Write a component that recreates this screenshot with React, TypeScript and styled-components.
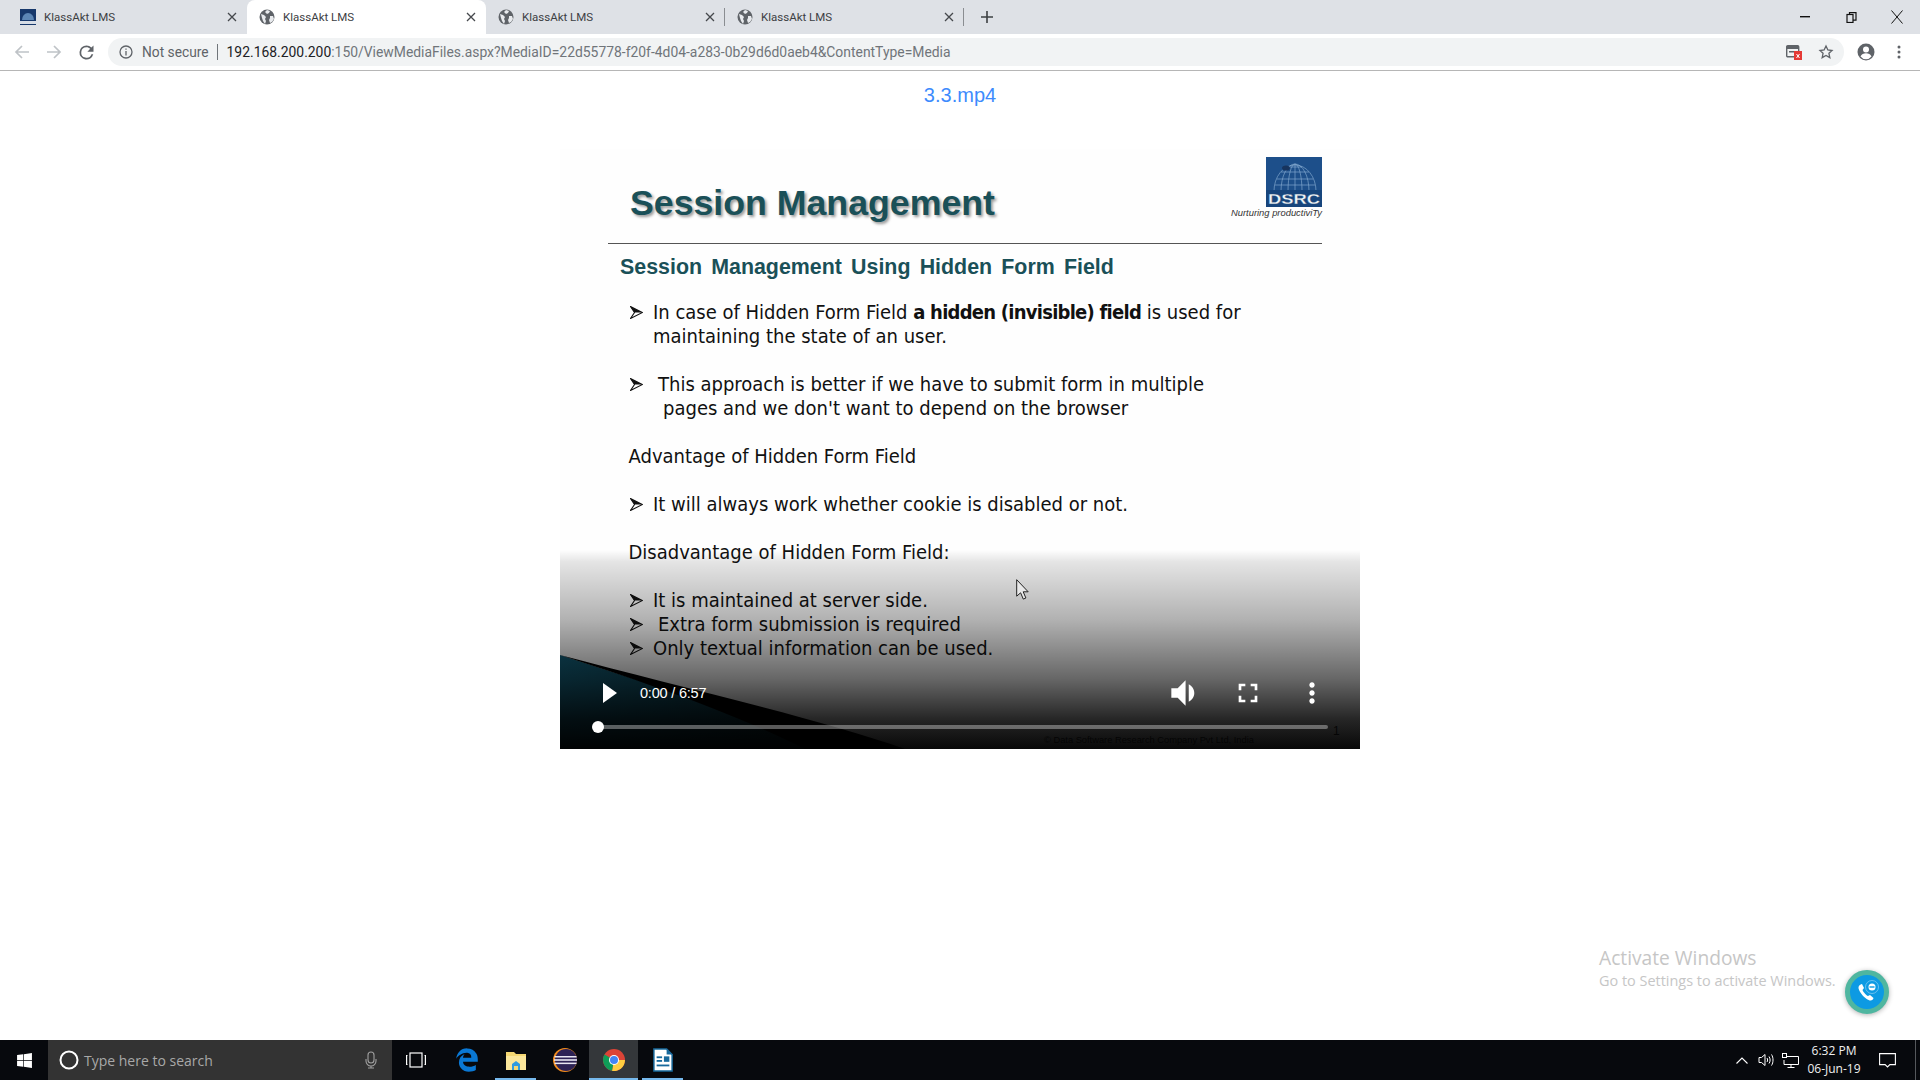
import React from "react";
import styled, { createGlobalStyle } from "styled-components";
import { FaWindows, FaEdgeLegacy } from "react-icons/fa";

const Global = createGlobalStyle`
  html, body { margin: 0; padding: 0; background: #fff; overflow: hidden; }
  * { box-sizing: border-box; }
`;

const Page = styled.div`
  width: 1920px;
  height: 1080px;
  display: flex;
  flex-direction: column;
  font-family: "Roboto", "Liberation Sans", sans-serif;
  position: relative;
  overflow: hidden;
`;

const TabStrip = styled.div`
  height: 34px;
  background: #dee1e6;
  display: flex;
  align-items: stretch;
  padding-left: 8px;
`;

const Tab = styled.div<{ $active?: boolean; $sep?: boolean }>`
  width: 239px;
  display: flex;
  align-items: center;
  padding: 0 0 0 12px;
  position: relative;
  background: ${(p) => (p.$active ? "#fff" : "transparent")};
  border-radius: 8px 8px 0 0;
  font-size: 11.5px;
  color: #3c4043;
  &::after {
    content: "";
    display: ${(p) => (p.$sep ? "block" : "none")};
    position: absolute;
    right: 0;
    top: 8px;
    height: 18px;
    width: 1px;
    background: #8a8d91;
  }
`;

const TabIcon = styled.span`
  width: 16px;
  height: 16px;
  display: flex;
  margin-right: 8px;
  flex: none;
`;

const TabTitle = styled.span`
  flex: 1;
  white-space: nowrap;
`;

const TabClose = styled.span`
  width: 10px;
  margin-right: 10px;
  display: flex;
  color: #45484c;
`;

const NewTab = styled.div`
  width: 44px;
  padding-left: 2px;
  display: flex;
  align-items: center;
  justify-content: center;
  color: #3c4043;
`;

const WindowButtons = styled.div`
  margin-left: auto;
  display: flex;
  align-items: center;
`;

const WindowButton = styled.div`
  width: 46px;
  height: 28px;
  display: flex;
  align-items: center;
  justify-content: center;
  color: #111;
`;

const Toolbar = styled.div`
  height: 37px;
  background: #fff;
  border-bottom: 1px solid #b6b6b6;
  display: flex;
  align-items: flex-start;
  padding-top: 4px;
`;

const NavButtons = styled.div`
  width: 108px;
  height: 28px;
  display: flex;
  align-items: center;
  padding-left: 14px;
  gap: 16px;
`;

const ReloadIcon = styled.svg`
  margin-left: -2px;
`;

const Omnibox = styled.div`
  width: 1736px;
  height: 28px;
  background: #f1f3f4;
  border-radius: 14px;
  display: flex;
  align-items: center;
  padding-left: 11px;
  white-space: nowrap;
`;

const SecurityLabel = styled.span`
  color: #5f6368;
  font-size: 13.75px;
  margin-left: 9px;
  padding-right: 8px;
  border-right: 1px solid #70757a;
  line-height: 16px;
`;

const UrlHost = styled.span`
  color: #202124;
  font-size: 13.9px;
  margin-left: 9px;
`;

const UrlPath = styled.span`
  color: #70757a;
  font-size: 13.9px;
`;

const OmniboxEnd = styled.div`
  margin-left: auto;
  display: flex;
  align-items: center;
  gap: 16px;
  padding-right: 10px;
`;

const ToolbarEnd = styled.div`
  flex: 1;
  height: 28px;
  display: flex;
  align-items: center;
  padding-left: 13px;
  gap: 22px;
`;

const Content = styled.div`
  flex: 1;
  background: #fff;
  display: flex;
  flex-direction: column;
  align-items: center;
`;

const MediaTitle = styled.div`
  font-family: "Liberation Sans", Arial, sans-serif;
  font-size: 20px;
  line-height: 48px;
  color: #3d8bfd;
  margin-bottom: 30px;
`;

const Video = styled.div`
  width: 800px;
  height: 600px;
  position: relative;
  overflow: hidden;
  background: #fefefe;
`;

const Slide = styled.div`
  height: 100%;
  padding: 0 38px 0 48px;
`;

const SlideHeader = styled.div`
  height: 95px;
  border-bottom: 1px solid #555;
  display: flex;
  justify-content: space-between;
  align-items: flex-start;
  padding-left: 22px;
`;

const SlideHeading = styled.h1`
  margin: 34px 0 0;
  font-family: "Liberation Sans", Arial, sans-serif;
  font-weight: 700;
  font-size: 35.7px;
  line-height: 40px;
  color: #1a5058;
  text-shadow: 2px 2px 3px rgba(0, 0, 0, 0.4);
`;

const Logo = styled.div`
  margin-top: 8px;
  display: flex;
  flex-direction: column;
  align-items: flex-end;
`;

const LogoTag = styled.div`
  font-family: "Liberation Sans", Arial, sans-serif;
  font-style: italic;
  font-size: 9.4px;
  line-height: 12px;
  color: #333;
  white-space: nowrap;
`;

const SlideSub = styled.h2`
  margin: 9px 0 0;
  padding-left: 12px;
  font-family: "Liberation Sans", Arial, sans-serif;
  font-weight: 700;
  font-size: 21.4px;
  line-height: 28px;
  word-spacing: 3.2px;
  color: #1a5058;
`;

const SlideBody = styled.div`
  margin-top: 19px;
  padding-left: 20.5px;
  font-family: "DejaVu Sans Condensed", "DejaVu Sans", sans-serif;
  font-size: 20px;
  line-height: 24px;
  color: #111;
`;

const Row = styled.div<{ $gap?: boolean }>`
  display: flex;
  margin-bottom: ${(p) => (p.$gap ? "24px" : "0")};
`;

const Plain = styled.div`
  margin-bottom: 24px;
`;

const Arrow = styled.span`
  width: 24.5px;
  height: 24px;
  padding-left: 1px;
  flex: none;
  display: flex;
  align-items: center;
`;

const RowText = styled.div<{ $indent?: number }>`
  padding-left: ${(p) => p.$indent ?? 0}px;
`;

const Hanging = styled.span`
  display: block;
  padding-left: 5px;
`;

const Strong = styled.b`
  letter-spacing: -0.75px;
`;

const SlideDecor = styled.svg`
  position: absolute;
  left: 0;
  bottom: 0;
`;

const SlideFooter = styled.span`
  position: absolute;
  left: 484px;
  bottom: 4px;
  font-family: "Liberation Sans", Arial, sans-serif;
  font-size: 9.3px;
  color: #3a3a3a;
  white-space: nowrap;
`;

const SlideNumber = styled.span`
  position: absolute;
  left: 773px;
  bottom: 11px;
  font-family: "Liberation Sans", Arial, sans-serif;
  font-size: 12px;
  color: #333;
`;

const Shade = styled.div`
  position: absolute;
  left: 0;
  right: 0;
  bottom: 0;
  height: 199px;
  background: linear-gradient(
    rgba(0, 0, 0, 0) 0%,
    rgba(0, 0, 0, 0.1) 6%,
    rgba(0, 0, 0, 0.3) 35%,
    rgba(0, 0, 0, 0.6) 65%,
    rgba(0, 0, 0, 0.85) 85%,
    rgba(0, 0, 0, 0.97) 100%
  );
`;

const Controls = styled.div`
  position: absolute;
  left: 0;
  right: 0;
  bottom: 0;
  height: 78px;
  color: #fff;
  display: flex;
  flex-direction: column;
`;

const ControlRow = styled.div`
  height: 32px;
  margin-top: 6px;
  display: flex;
  align-items: center;
  padding-left: 42px;
`;

const Time = styled.span`
  font-family: "Liberation Sans", Arial, sans-serif;
  font-size: 14.5px;
  margin-left: 22px;
  width: 512px;
  letter-spacing: -0.2px;
`;

const ControlIcon = styled.span<{ $w: number }>`
  width: ${(p) => p.$w}px;
  height: 32px;
  display: flex;
  justify-content: center;
  align-items: center;
`;

const Timeline = styled.div`
  margin: 16px 32px 0 38px;
  height: 4px;
  background: rgba(255, 255, 255, 0.35);
  border-radius: 2px;
  position: relative;
`;

const Thumb = styled.span`
  position: absolute;
  left: -6px;
  top: -4px;
  width: 12px;
  height: 12px;
  border-radius: 50%;
  background: #fff;
`;

const Pointer = styled.svg`
  position: absolute;
  left: 1016px;
  top: 579px;
`;

const Watermark = styled.div`
  position: absolute;
  left: 1599px;
  top: 946px;
  font-family: "Open Sans", "Noto Sans", sans-serif;
  color: #c6c6c6;
  white-space: nowrap;
`;

const WatermarkTitle = styled.div`
  font-size: 19.2px;
  line-height: 24px;
`;

const WatermarkSub = styled.div`
  font-size: 14.45px;
  line-height: 21px;
`;

const CallBubble = styled.div`
  position: absolute;
  left: 1845px;
  top: 970px;
  width: 44px;
  height: 44px;
  border-radius: 50%;
  background: #0d9ae3;
  border: 5px solid #4fb6a0;
  box-shadow: 0 1px 5px rgba(0, 0, 0, 0.3);
  display: flex;
  align-items: center;
  justify-content: center;
`;

const Taskbar = styled.div`
  height: 40px;
  background: #07090d;
  display: flex;
  align-items: stretch;
  color: #fff;
`;

const StartButton = styled.div`
  width: 48px;
  display: flex;
  align-items: center;
  justify-content: center;
`;

const SearchBox = styled.div`
  width: 344px;
  background: #333;
  display: flex;
  align-items: center;
  padding-left: 11px;
  font-family: "Open Sans", "Noto Sans", sans-serif;
  font-size: 14px;
  color: #a8a8a8;
`;

const SearchText = styled.span`
  margin-left: 5px;
  flex: 1;
`;

const SearchMic = styled.span`
  display: flex;
  margin-right: 15px;
`;

const TaskSlot = styled.div<{ $active?: boolean; $open?: boolean }>`
  width: 49px;
  display: flex;
  align-items: center;
  justify-content: center;
  background: ${(p) => (p.$active ? "#34373a" : "transparent")};
  position: relative;
  &::after {
    content: "";
    display: ${(p) => (p.$open ? "block" : "none")};
    position: absolute;
    left: ${(p) => (p.$active ? "0" : "4px")};
    right: ${(p) => (p.$active ? "0" : "4px")};
    bottom: 0;
    height: 2px;
    background: #76b9ed;
  }
`;

const TaskViewSlot = styled(TaskSlot)`
  width: 48px;
  margin-right: 2px;
`;

const Tray = styled.div`
  margin-left: auto;
  display: flex;
  align-items: stretch;
`;

const TraySlot = styled.div<{ $w: number }>`
  width: ${(p) => p.$w}px;
  display: flex;
  align-items: center;
  justify-content: center;
`;

const Clock = styled.div`
  width: 64px;
  font-family: "Open Sans", "Noto Sans", sans-serif;
  font-size: 12px;
  line-height: 18px;
  color: #f0f0f0;
  text-align: center;
  white-space: nowrap;
  display: flex;
  flex-direction: column;
  justify-content: center;
`;

const ShowDesktop = styled.div`
  width: 5px;
  margin-left: 7px;
  border-left: 1px solid #55585c;
`;

const Globe = () => (
  <svg width="16" height="16" viewBox="0 0 16 16">
    <circle cx="8" cy="8" r="7.500" fill="#5f6368" />
    <path d="M2 5l3 1 2 2-1 2 1 2-1 3-2-3-1-3zM8 1l3 1-1 2-2 1-2-2zM11 7l3 0 1 3-2 3-2 1-1-3 1-2z" fill="#e8eaed" />
  </svg>
);

const KlassIcon = () => (
  <svg width="16" height="16" viewBox="0 0 16 16">
    <rect width="16" height="16" fill="#17386b" />
    <path d="M2 11a6 7 0 0 1 12 0z" fill="#5c86b5" />
    <rect y="12" width="16" height="3" fill="#d7dde6" />
  </svg>
);

const CloseX = () => (
  <svg width="10" height="10" viewBox="0 0 10 10" stroke="currentColor" strokeWidth="1.300" fill="none">
    <path d="M1 1l8 8M9 1l-8 8" />
  </svg>
);

const ArrowBullet = () => (
  <svg width="13" height="13" viewBox="0 0 13 13">
    <path d="M0.500 0.500L12.500 6.500L0.500 12.500L4.500 6.500z" fill="none" stroke="#111" strokeWidth="1.100" />
    <path d="M0.500 0.500L12.500 6.500L4.500 6.500z" fill="#111" />
  </svg>
);

const DsrcLogo = () => (
  <svg width="56" height="50" viewBox="0 0 56 50">
    <rect width="56" height="50" fill="#1d4f8a" />
    <g fill="none" stroke="#8fb4d6" strokeWidth="0.600">
      <path d="M8 34a21 26 0 0 1 42 0" />
      <path d="M15 34a14 27 0 0 1 28 0" />
      <path d="M22 34a7 27 0 0 1 14 0" />
      <path d="M29 7v27M11 22h36M9 28h40M15 15h28M22 10h14" />
    </g>
    <ellipse cx="20" cy="11" rx="4" ry="2.500" fill="#17345e" />
    <rect y="33" width="56" height="17" fill="#17457c" />
    <text x="28" y="47" textAnchor="middle" fontFamily="Liberation Sans" fontWeight="700" fontSize="15" fill="#f2f5f8" stroke="#274d7a" strokeWidth="0.300" textLength="52" lengthAdjust="spacingAndGlyphs">
      DSRC
    </text>
  </svg>
);

const ChromeIcon = () => (
  <svg width="24" height="24" viewBox="0 0 48 48">
    <circle cx="24" cy="24" r="22" fill="#db4437" />
    <path d="M24 24H46A22 22 0 0 1 20 45.600z" fill="#ffcd40" />
    <path d="M24 24L20 45.600A22 22 0 0 1 5 13z" fill="#0f9d58" />
    <circle cx="24" cy="24" r="10" fill="#fff" />
    <circle cx="24" cy="24" r="8" fill="#4285f4" />
  </svg>
);

const FolderIcon = () => (
  <svg width="24" height="24" viewBox="0 0 24 24">
    <path d="M2 4h8l2 2h10v16H2z" fill="#f5d772" />
    <rect x="2" y="8" width="20" height="14" fill="#fbe69a" />
    <path d="M8 22v-6l4-3 4 3v6z" fill="#2f9be0" />
    <rect x="10" y="18" width="4" height="4" fill="#f5d772" />
  </svg>
);

const EclipseIcon = () => (
  <svg width="24" height="24" viewBox="0 0 24 24">
    <circle cx="12" cy="12" r="12" fill="#f28c1e" />
    <circle cx="13" cy="12" r="11" fill="#2c2255" />
    <g fill="#e8e6f2">
      <rect x="1.500" y="8" width="22" height="1.500" />
      <rect x="1" y="11.200" width="23" height="1.600" />
      <rect x="1.500" y="14.600" width="22" height="1.500" />
    </g>
  </svg>
);

const DocIcon = () => (
  <svg width="20" height="26" viewBox="0 0 22 26">
    <path d="M1 1h14l6 6v18H1z" fill="#fff" stroke="#17699c" strokeWidth="1.600" />
    <path d="M15 1l6 6h-6z" fill="#17699c" />
    <g fill="#17699c">
      <rect x="4" y="9" width="6" height="2" />
      <rect x="4" y="13" width="6" height="2" />
      <rect x="12" y="9" width="6" height="6" />
      <rect x="4" y="18" width="14" height="2" />
    </g>
  </svg>
);

const tabs = [
  { icon: <KlassIcon />, active: false, sep: false },
  { icon: <Globe />, active: true, sep: false },
  { icon: <Globe />, active: false, sep: true },
  { icon: <Globe />, active: false, sep: true },
];

export default function App() {
  return (
    <Page>
      <Global />
      <TabStrip>
        {tabs.map((t, i) => (
          <Tab key={i} $active={t.active} $sep={t.sep}>
            <TabIcon>{t.icon}</TabIcon>
            <TabTitle>KlassAkt LMS</TabTitle>
            <TabClose>
              <CloseX />
            </TabClose>
          </Tab>
        ))}
        <NewTab>
          <svg width="12" height="12" viewBox="0 0 12 12" stroke="currentColor" strokeWidth="1.600">
            <path d="M6 0v12M0 6h12" />
          </svg>
        </NewTab>
        <WindowButtons>
          <WindowButton>
            <svg width="10" height="2" viewBox="0 0 10 2"><rect width="10" height="1.400" fill="currentColor" /></svg>
          </WindowButton>
          <WindowButton>
            <svg width="11" height="11" viewBox="0 0 11 11" fill="none" stroke="currentColor" strokeWidth="1.200">
              <rect x="1" y="2.500" width="6" height="8" />
              <path d="M3.500 2.500V.7h6.500v7.500H7" />
            </svg>
          </WindowButton>
          <WindowButton>
            <svg width="12" height="14" viewBox="0 0 12 14" fill="none" stroke="currentColor" strokeWidth="1">
              <path d="M.5.5l11 13M11.500.5l-11 13" />
            </svg>
          </WindowButton>
        </WindowButtons>
      </TabStrip>

      <Toolbar>
        <NavButtons>
          <svg width="16" height="16" viewBox="0 0 16 16" fill="none" stroke="#bfc3c7" strokeWidth="1.700">
            <path d="M15 8H2M8 2L2 8l6 6" />
          </svg>
          <svg width="16" height="16" viewBox="0 0 16 16" fill="none" stroke="#bfc3c7" strokeWidth="1.700">
            <path d="M1 8h13M8 2l6 6-6 6" />
          </svg>
          <ReloadIcon width="21" height="21" viewBox="0 0 24 24" fill="#5f6368">
            <path d="M17.650 6.350A7.950 7.950 0 0 0 12 4a8 8 0 1 0 7.730 10h-2.080A6 6 0 1 1 12 6c1.660 0 3.140.69 4.220 1.780L13 11h7V4l-2.350 2.350z" />
          </ReloadIcon>
        </NavButtons>
        <Omnibox>
          <svg width="14" height="14" viewBox="0 0 14 14" fill="none" stroke="#5f6368" strokeWidth="1.300">
            <circle cx="7" cy="7" r="6" />
            <path d="M7 6v4.500M7 3.500v1.300" />
          </svg>
          <SecurityLabel>Not secure</SecurityLabel>
          <UrlHost>192.168.200.200</UrlHost>
          <UrlPath>:150/ViewMediaFiles.aspx?MediaID=22d55778-f20f-4d04-a283-0b29d6d0aeb4&amp;ContentType=Media</UrlPath>
          <OmniboxEnd>
            <svg width="16" height="16" viewBox="0 0 16 16">
              <rect x="0.700" y="1.700" width="12" height="11" rx="1" fill="none" stroke="#5f6368" strokeWidth="1.400" />
              <rect x="1" y="2" width="12" height="3" fill="#5f6368" />
              <rect x="3" y="7" width="5" height="1.500" fill="#5f6368" />
              <rect x="8" y="7" width="8" height="9" fill="#e53935" />
              <path d="M10.500 10l3 4M13.500 10l-3 4" stroke="#fff" strokeWidth="1" />
            </svg>
            <svg width="16" height="16" viewBox="0 0 24 24" fill="none" stroke="#5f6368" strokeWidth="2">
              <path d="M12 3l2.800 6 6.200.700-4.600 4.300 1.300 6.500L12 17.200 6.300 20.500l1.300-6.500L3 9.700 9.200 9z" />
            </svg>
          </OmniboxEnd>
        </Omnibox>
        <ToolbarEnd>
          <svg width="18" height="18" viewBox="0 0 18 18">
            <circle cx="9" cy="9" r="8.500" fill="#5f6368" />
            <circle cx="9" cy="6.500" r="3" fill="#fff" />
            <path d="M3.500 13.500c1-2.500 3-3.200 5.500-3.200s4.500.700 5.500 3.200a7 7 0 0 1-11 0z" fill="#fff" />
          </svg>
          <svg width="4" height="14" viewBox="0 0 4 14" fill="#5f6368">
            <circle cx="2" cy="2" r="1.500" />
            <circle cx="2" cy="7" r="1.500" />
            <circle cx="2" cy="12" r="1.500" />
          </svg>
        </ToolbarEnd>
      </Toolbar>

      <Content>
        <MediaTitle>3.3.mp4</MediaTitle>
        <Video>
          <SlideDecor width="800" height="100" viewBox="0 0 800 100">
            <defs>
              <linearGradient id="teal" x1="0" y1="0" x2="1" y2="0">
                <stop offset="0" stopColor="#14607a" />
                <stop offset="1" stopColor="#0c2a30" />
              </linearGradient>
            </defs>
            <path d="M0 6L290 100H0z" fill="url(#teal)" />
            <path d="M0 6C120 38 260 70 345 100H245C170 62 80 32 0 6z" fill="#000" />
          </SlideDecor>
          <Slide>
            <SlideHeader>
              <SlideHeading>Session Management</SlideHeading>
              <Logo>
                <DsrcLogo />
                <LogoTag>Nurturing productiviTy</LogoTag>
              </Logo>
            </SlideHeader>
            <SlideSub>Session Management Using Hidden Form Field</SlideSub>
            <SlideBody>
              <Row $gap>
                <Arrow><ArrowBullet /></Arrow>
                <RowText>
                  In case of Hidden Form Field <Strong>a hidden (invisible) field</Strong> is used for
                  <br />
                  maintaining the state of an user.
                </RowText>
              </Row>
              <Row $gap>
                <Arrow><ArrowBullet /></Arrow>
                <RowText $indent={5}>
                  This approach is better if we have to submit form in multiple
                  <Hanging>pages and we don't want to depend on the browser</Hanging>
                </RowText>
              </Row>
              <Plain>Advantage of Hidden Form Field</Plain>
              <Row $gap>
                <Arrow><ArrowBullet /></Arrow>
                <RowText>It will always work whether cookie is disabled or not.</RowText>
              </Row>
              <Plain>Disadvantage of Hidden Form Field:</Plain>
              <Row>
                <Arrow><ArrowBullet /></Arrow>
                <RowText>It is maintained at server side.</RowText>
              </Row>
              <Row>
                <Arrow><ArrowBullet /></Arrow>
                <RowText $indent={5}>Extra form submission is required</RowText>
              </Row>
              <Row>
                <Arrow><ArrowBullet /></Arrow>
                <RowText>Only textual information can be used.</RowText>
              </Row>
            </SlideBody>
          </Slide>
          <SlideFooter>© Data Software Research Company Pvt Ltd, India</SlideFooter>
          <SlideNumber>1</SlideNumber>
          <Shade />
          <Controls>
            <ControlRow>
              <svg width="16" height="20" viewBox="0 0 16 20" fill="#fff">
                <path d="M1 0l14 10L1 20z" />
              </svg>
              <Time>0:00 / 6:57</Time>
              <ControlIcon $w={64}>
                <svg width="38" height="38" viewBox="0 0 24 24" fill="#fff">
                  <path d="M4 9v6h4l5 5V4L8 9H4zm11-2.500v11c2-1 3.500-3 3.500-5.500S17 7.500 15 6.500z" />
                </svg>
              </ControlIcon>
              <ControlIcon $w={64}>
                <svg width="32" height="32" viewBox="0 0 24 24" fill="#fff">
                  <path d="M7 14H5v5h5v-2H7v-3zm-2-4h2V7h3V5H5v5zm12 7h-3v2h5v-5h-2v3zM14 5v2h3v3h2V5h-5z" />
                </svg>
              </ControlIcon>
              <ControlIcon $w={64}>
                <svg width="32" height="32" viewBox="0 0 24 24" fill="#fff">
                  <path d="M12 8c1.100 0 2-.9 2-2s-.9-2-2-2-2 .9-2 2 .9 2 2 2zm0 2c-1.100 0-2 .9-2 2s.9 2 2 2 2-.9 2-2-.9-2-2-2zm0 6c-1.100 0-2 .9-2 2s.9 2 2 2 2-.9 2-2-.9-2-2-2z" />
                </svg>
              </ControlIcon>
            </ControlRow>
            <Timeline>
              <Thumb />
            </Timeline>
          </Controls>
        </Video>
      </Content>

      <Taskbar>
        <StartButton>
          <FaWindows size={17} color="#fff" />
        </StartButton>
        <SearchBox>
          <svg width="20" height="20" viewBox="0 0 20 20" fill="none" stroke="#fff" strokeWidth="2">
            <circle cx="10" cy="10" r="8.500" />
          </svg>
          <SearchText>Type here to search</SearchText>
          <SearchMic>
            <svg width="12" height="18" viewBox="0 0 12 18" fill="none" stroke="#a0a0a0" strokeWidth="1.100">
              <rect x="3" y="1" width="6" height="11" rx="3" />
              <path d="M1 8v2a5 5 0 0 0 10 0V8M6 15v2M3 17h6" />
            </svg>
          </SearchMic>
        </SearchBox>
        <TaskViewSlot>
          <svg width="20" height="16" viewBox="0 0 20 16" fill="none" stroke="#fff" strokeWidth="1.200">
            <rect x="4" y="1" width="12" height="14" />
            <path d="M1.500 3.500H.6v9h.9M18.500 3.500h.9v9h-.9" />
          </svg>
        </TaskViewSlot>
        <TaskSlot>
          <FaEdgeLegacy size={24} color="#0a78d4" />
        </TaskSlot>
        <TaskSlot $open>
          <FolderIcon />
        </TaskSlot>
        <TaskSlot>
          <EclipseIcon />
        </TaskSlot>
        <TaskSlot $active $open>
          <ChromeIcon />
        </TaskSlot>
        <TaskSlot $open>
          <DocIcon />
        </TaskSlot>
        <Tray>
          <TraySlot $w={24}>
            <svg width="12" height="7" viewBox="0 0 12 7" fill="none" stroke="#fff" strokeWidth="1.100">
              <path d="M.5 6.500L6 1l5.500 5.500" />
            </svg>
          </TraySlot>
          <TraySlot $w={24}>
            <svg width="16" height="14" viewBox="0 0 16 14" fill="none" stroke="#fff" strokeWidth="1">
              <path d="M1 4.500v5h2.500L7 12.500v-11L3.500 4.500zM9 5c.8 1.200.8 2.800 0 4M11 3.500c1.500 2 1.500 5 0 7M13.500 1.500c2 3 2 8 0 11" />
            </svg>
          </TraySlot>
          <TraySlot $w={24}>
            <svg width="17" height="15" viewBox="0 0 17 15" fill="none" stroke="#fff" strokeWidth="1">
              <path d="M4 3.500h12.500v8H2V7M9 11.500v3M5.500 14.500h7" />
              <rect x=".5" y=".5" width="4" height="4" />
            </svg>
          </TraySlot>
          <Clock>
            <span>6:32 PM</span>
            <span>06-Jun-19</span>
          </Clock>
          <TraySlot $w={42}>
            <svg width="17" height="15" viewBox="0 0 17 15" fill="none" stroke="#fff" strokeWidth="1.100">
              <path d="M.6.6h15.800v11h-5.500L8.500 14 6.100 11.600H.6z" />
            </svg>
          </TraySlot>
          <ShowDesktop />
        </Tray>
      </Taskbar>

      <Pointer width="13" height="21" viewBox="0 0 13 21">
        <path d="M.7.700v16.500l3.900-3.400 2.700 6.300 2.600-1.100-2.700-6.200h5z" fill="#e8e8e8" stroke="#222" strokeWidth="1" />
      </Pointer>
      <Watermark>
        <WatermarkTitle>Activate Windows</WatermarkTitle>
        <WatermarkSub>Go to Settings to activate Windows.</WatermarkSub>
      </Watermark>
      <CallBubble>
        <svg width="28" height="28" viewBox="0 0 28 28">
          <path d="M6 8c-1 1.500-.5 4 2.500 8s7 6.500 9 6.500c1.500 0 3-1.500 3-2.500l-3.500-3-2 1c-1.500-.5-4.500-3.500-5.500-6l1.500-2-2-4c-1 0-2.500 1-3 2z" fill="#fff" />
          <circle cx="19" cy="9" r="6.500" fill="none" stroke="#8fd0f3" strokeWidth=".7" />
          <circle cx="19" cy="9" r="3.500" fill="#fff" />
          <rect x="16.500" y="8.300" width="5" height="1.400" fill="#0d9ae3" />
        </svg>
      </CallBubble>
    </Page>
  );
}
